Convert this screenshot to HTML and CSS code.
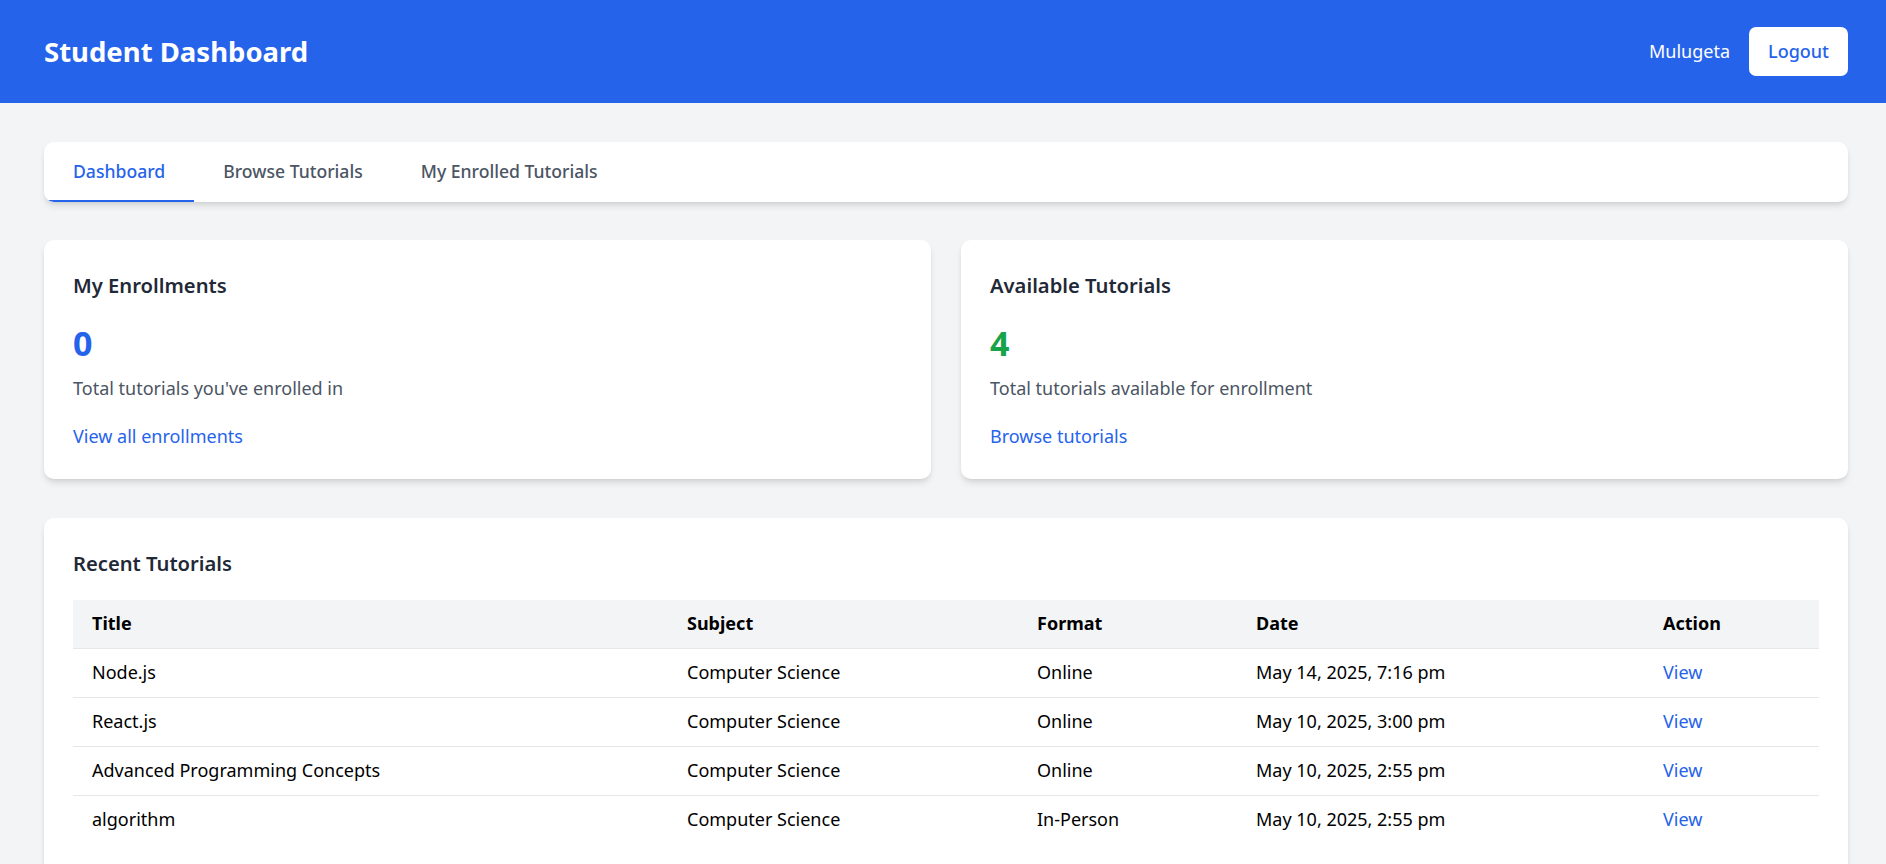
FILE: index.html
```html
<!DOCTYPE html>
<html lang="en">
<head>
<meta charset="utf-8">
<title>Student Dashboard</title>
<link rel="stylesheet" href="styles.css">
</head>
<body>
<header class="topbar">
  <h1 class="brand">Student Dashboard</h1>
  <div class="user">
    <span class="user-name">Mulugeta</span>
    <button class="logout">Logout</button>
  </div>
</header>
<main class="main">
  <nav class="tabs">
    <a class="tab tab-active">Dashboard</a>
    <a class="tab">Browse Tutorials</a>
    <a class="tab">My Enrolled Tutorials</a>
  </nav>
  <section class="stats">
    <div class="card stat">
      <h2 class="card-title">My Enrollments</h2>
      <div class="stat-num stat-blue">0</div>
      <p class="stat-desc">Total tutorials you've enrolled in</p>
      <a class="link">View all enrollments</a>
    </div>
    <div class="card stat">
      <h2 class="card-title">Available Tutorials</h2>
      <div class="stat-num stat-green">4</div>
      <p class="stat-desc">Total tutorials available for enrollment</p>
      <a class="link">Browse tutorials</a>
    </div>
  </section>
  <section class="card recent">
    <h2 class="card-title">Recent Tutorials</h2>
    <table class="table">
      <colgroup>
        <col class="c-title"><col class="c-subject"><col class="c-format"><col class="c-date"><col class="c-action">
      </colgroup>
      <thead>
        <tr><th>Title</th><th>Subject</th><th>Format</th><th>Date</th><th>Action</th></tr>
      </thead>
      <tbody>
        <tr><td>Node.js</td><td>Computer Science</td><td>Online</td><td>May 14, 2025, 7:16 pm</td><td><a class="link">View</a></td></tr>
        <tr><td>React.js</td><td>Computer Science</td><td>Online</td><td>May 10, 2025, 3:00 pm</td><td><a class="link">View</a></td></tr>
        <tr><td>Advanced Programming Concepts</td><td>Computer Science</td><td>Online</td><td>May 10, 2025, 2:55 pm</td><td><a class="link">View</a></td></tr>
        <tr><td>algorithm</td><td>Computer Science</td><td>In-Person</td><td>May 10, 2025, 2:55 pm</td><td><a class="link">View</a></td></tr>
      </tbody>
    </table>
  </section>
</main>
</body>
</html>
```
FILE: styles.css
```css
* { box-sizing: border-box; }
html, body { margin: 0; padding: 0; }
body {
  font-family: "Noto Sans", "Open Sans", sans-serif;
  font-size: 18px;
  line-height: 28.8px;
  background: #f3f4f6;
  color: #111827;
  overflow: hidden;
}
.topbar {
  height: 103px;
  background: #2563eb;
  display: flex;
  align-items: center;
  justify-content: space-between;
  padding: 0 38px 0 44px;
  color: #fff;
}
.brand {
  margin: 0;
  font-size: 27.5px;
  line-height: 34px;
  font-weight: 700;
}
.user {
  display: flex;
  align-items: center;
  gap: 19px;
}
.user-name { font-size: 18px; }
.logout {
  font-family: inherit;
  font-size: 18px;
  line-height: 28.8px;
  font-weight: 500;
  color: #2563eb;
  background: #fff;
  border: 0;
  border-radius: 7px;
  padding: 10px 19px;
  height: 49px;
}
.main {
  padding: 39px 38px 0 44px;
}
.card {
  background: #fff;
  border-radius: 10px;
  box-shadow: 0 5px 7px -1px rgba(0,0,0,0.1), 0 2px 5px -2px rgba(0,0,0,0.1);
}
.tabs {
  display: flex;
  height: 60px;
  background: #fff;
  border-radius: 10px;
  box-shadow: 0 5px 7px -1px rgba(0,0,0,0.1), 0 2px 5px -2px rgba(0,0,0,0.1);
  overflow: hidden;
}
.tab {
  display: flex;
  align-items: center;
  padding: 0 29px;
  font-size: 17.6px;
  font-weight: 500;
  color: #4b5563;
  border-bottom: 2px solid transparent;
}
.tab-active {
  color: #2563eb;
  border-bottom-color: #2563eb;
}
.stats {
  display: grid;
  grid-template-columns: 1fr 1fr;
  gap: 30px;
  margin-top: 38px;
}
.stat {
  padding: 29px;
  height: 239px;
}
.card-title {
  margin: 0;
  font-size: 20.2px;
  line-height: 33.6px;
  font-weight: 600;
  color: #1f2937;
}
.stat-num {
  margin-top: 19px;
  font-size: 34px;
  line-height: 43px;
  font-weight: 700;
}
.stat-blue { color: #2563eb; }
.stat-green { color: #16a34a; }
.stat-desc {
  margin: 9px 0 0;
  color: #4b5563;
}
.link {
  color: #2563eb;
  display: inline-block;
  margin-top: 20px;
}
.recent {
  margin-top: 39px;
  padding: 29px 29px 29px;
}
.table {
  margin-top: 19px;
  width: 100%;
  border-collapse: separate;
  border-spacing: 0;
  table-layout: fixed;
  color: #000;
}
.c-title { width: 595px; }
.c-subject { width: 350px; }
.c-format { width: 219px; }
.c-date { width: 407px; }
.c-action { width: auto; }
.table th {
  background: #f3f4f6;
  text-align: left;
  font-weight: 700;
  padding: 9px 19px;
  height: 48px;
}
.table td {
  padding: 9px 19px;
  height: 49px;
  border-top: 1px solid #e5e7eb;
  white-space: nowrap;
}
.table td .link { margin-top: 0; }
```
